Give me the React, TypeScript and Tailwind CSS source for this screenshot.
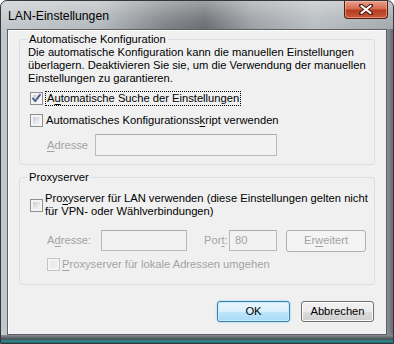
import React from "react";

const FONT = "font-['Liberation_Sans',Arial,sans-serif]";

function CheckBox({ checked = false, disabled = false }: { checked?: boolean; disabled?: boolean }) {
  return (
    <div
      className={`w-[13px] h-[13px] shrink-0 border p-[2px] ${
        disabled ? "border-[#c4c4c4] bg-[#f4f4f4]" : "border-[#8e8f8f] bg-[#f4f4f4]"
      }`}
    >
      <div
        className={`relative w-full h-full ${
          disabled
            ? "bg-[#ececec]"
            : "bg-gradient-to-br from-[#c9cdd3] via-[#e2e4e7] to-[#f7f7f7]"
        }`}
      >
        {checked && (
          <svg className="absolute left-[-2px] top-[-2px]" width="11" height="11" viewBox="0 0 11 11">
            <path d="M2 5.5 L4.3 8 L9 1.8" fill="none" stroke="#4a5f8f" strokeWidth="1.8" strokeLinecap="square" />
          </svg>
        )}
      </div>
    </div>
  );
}

function U({ children }: { children: React.ReactNode }) {
  return <span className="underline underline-offset-[2px]">{children}</span>;
}

function Field({ w }: { w: string }) {
  return <div className={`${w} shrink-0 h-full border border-[#b7b9bb] border-t-[#a9abae] bg-[#f2f2f2]`} />;
}

export default function App() {
  return (
    <div className={`w-[394px] h-[344px] overflow-hidden bg-white ${FONT} text-[11.2px] leading-[13px] text-black`}>
      <div className="flex flex-col w-full h-full rounded-t-[7px] border border-[#33373a] bg-[linear-gradient(90deg,#c3c8cc_0%,#b4b9bd_25%,#7e8286_42%,#6a6e72_52%,#9da1a5_64%,#b9bec2_80%,#a3a8ac_100%)] overflow-hidden">
        {/* Title bar */}
        <div className="relative h-[28px] shrink-0 bg-[linear-gradient(180deg,rgba(255,255,255,0.35)_0%,rgba(255,255,255,0.1)_60%,rgba(255,255,255,0)_100%)]">
          <span className="absolute left-[7px] top-[8px] text-[12.2px] leading-[14px] text-black">
            LAN-Einstellungen
          </span>
          <div className="absolute right-[5px] top-0 w-[44px] h-[18px] rounded-b-[4px] border border-[#5a1a10] border-t-0 bg-[linear-gradient(180deg,#e8a090_0%,#d46a52_45%,#b83c20_55%,#c85a3a_100%)] flex items-center justify-center shadow-[inset_0_0_0_1px_rgba(255,200,180,0.5)]">
            <svg width="14" height="11" viewBox="0 0 14 11">
              <path d="M2 1.5 L12 9.5 M12 1.5 L2 9.5" stroke="#4a1a10" strokeWidth="4" strokeLinecap="round" />
              <path d="M2.5 2 L11.5 9 M11.5 2 L2.5 9" stroke="#ffffff" strokeWidth="2.2" strokeLinecap="round" />
            </svg>
          </div>
        </div>

        <div className="flex flex-1 min-h-0">
          <div className="w-[6px] shrink-0" />
          {/* Client area */}
          <div className="flex-1 min-w-0 flex flex-col border border-[#5d6166] bg-[#f0f0f0] shadow-[inset_1px_1px_0_#ffffff]">
            <div className="flex flex-col px-[11px] pt-[3px]">
              {/* Group 1 */}
              <fieldset className="min-w-0 border border-[#d5dfe5] rounded-[3px] pl-[10px] pr-[8px] pb-[8px]">
                <legend className="ml-[-3px] px-[2px]">Automatische Konfiguration</legend>
                <div className="-ml-[2px] whitespace-nowrap">
                  <div>Die automatische Konfiguration kann die manuellen Einstellungen</div>
                  <div>überlagern. Deaktivieren Sie sie, um die Verwendung der manuellen</div>
                  <div>Einstellungen zu garantieren.</div>
                </div>
                <div className="flex items-center gap-[2px] mt-[7px] h-[13px]">
                  <CheckBox checked />
                  <span className="border border-dotted border-black px-[1px] leading-[13px] whitespace-nowrap">
                    A<U>u</U>tomatische Suche der Einstellungen
                  </span>
                </div>
                <div className="flex items-center gap-[3px] mt-[9px] h-[13px]">
                  <CheckBox />
                  <span className="whitespace-nowrap">
                    Automatisches Konfigurationss<U>k</U>ript verwenden
                  </span>
                </div>
                <div className="flex items-center mt-[7px] h-[22px]">
                  <span className="w-[48px] pl-[17px] box-content shrink-0 text-[#a3a3a3] whitespace-nowrap">
                    <U>A</U>dresse
                  </span>
                  <Field w="w-[182px]" />
                </div>
              </fieldset>

              {/* Group 2 */}
              <fieldset className="min-w-0 mt-[6px] border border-[#d5dfe5] rounded-[3px] pl-[10px] pr-[8px] pb-[13px]">
                <legend className="ml-[-3px] px-[2px]">Proxyserver</legend>
                <div className="flex items-center gap-[2px] mt-[8px]">
                  <CheckBox />
                  <span className="whitespace-nowrap">
                    Pro<U>x</U>yserver für LAN verwenden (diese Einstellungen gelten nicht
                    <br />
                    für VPN- oder Wählverbindungen)
                  </span>
                </div>
                <div className="flex items-center mt-[12px] h-[21px] text-[#a3a3a3]">
                  <span className="w-[54px] pl-[17px] box-content shrink-0 whitespace-nowrap">
                    A<U>d</U>resse:
                  </span>
                  <Field w="w-[86px]" />
                  <span className="ml-[17px] w-[25px] shrink-0 whitespace-nowrap">
                    Por<U>t</U>:
                  </span>
                  <div className="w-[48px] shrink-0 h-full border border-[#b7b9bb] border-t-[#a9abae] bg-[#f2f2f2] pl-[5px] leading-[19px]">
                    80
                  </div>
                  <div className="ml-[9px] w-[80px] shrink-0 h-[22px] rounded-[3px] border border-[#adb2b5] bg-[#f4f4f4] flex items-center justify-center">
                    Er<U>w</U>eitert
                  </div>
                </div>
                <div className="flex items-center gap-[2px] mt-[7px] h-[13px] pl-[17px]">
                  <CheckBox disabled />
                  <span className="text-[#a3a3a3] whitespace-nowrap">
                    <U>P</U>roxyserver für lokale Adressen umgehen
                  </span>
                </div>
              </fieldset>

              {/* Buttons */}
              <div className="flex justify-end gap-[11px] mt-[16px] pr-[1px]">
                <div className="w-[73px] h-[21px] rounded-[3px] border border-[#3c7fb1] bg-[linear-gradient(180deg,#eaf6fd_0%,#d9f0fc_50%,#bee6fd_51%,#a7d9f5_100%)] shadow-[inset_0_0_0_1px_#c8ecff,0_0_2px_#6cc4f0] flex items-center justify-center">
                  OK
                </div>
                <div className="w-[73px] h-[21px] rounded-[3px] border border-[#707070] bg-[linear-gradient(180deg,#f2f2f2_0%,#ebebeb_50%,#dddddd_51%,#cfcfcf_100%)] shadow-[inset_0_0_0_1px_#fcfcfc] flex items-center justify-center">
                  Abbrechen
                </div>
              </div>
            </div>
          </div>
          <div className="w-[6px] shrink-0 bg-[linear-gradient(90deg,rgba(0,0,0,0.15),rgba(0,0,0,0.35))]" />
        </div>
        <div className="h-[8px] shrink-0 bg-[linear-gradient(180deg,#8a9096_0%,#4a5258_50%,#2f8a8f_80%,#1d5a60_100%)]" />
      </div>
    </div>
  );
}
